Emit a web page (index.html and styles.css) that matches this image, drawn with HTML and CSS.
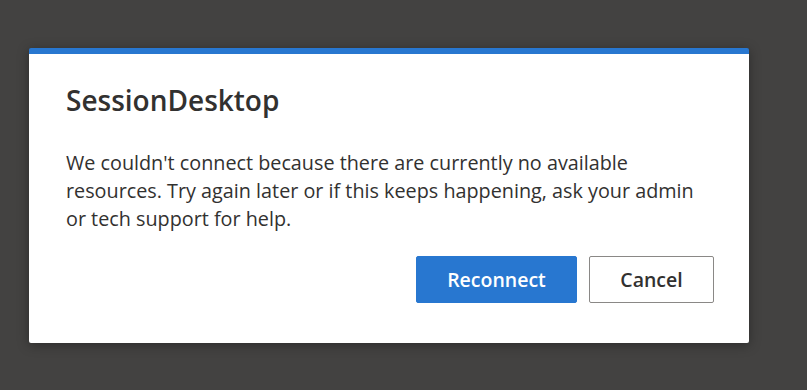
FILE: index.html
```html
<!DOCTYPE html>
<html lang="en">
<head>
    <meta charset="UTF-8">
    <meta name="viewport" content="width=device-width, initial-scale=1.0">
    <title>SessionDesktop</title>
    <link rel="stylesheet" href="styles.css">
</head>
<body>
<div class="dialog">
    <h1 class="dialog-title">SessionDesktop</h1>
    <p class="dialog-text">We couldn't connect because there are currently no available resources. Try again later or if this keeps happening, ask your admin or tech support for help.</p>
    <div class="dialog-actions">
        <button class="btn btn-primary">Reconnect</button>
        <button class="btn btn-default">Cancel</button>
    </div>
</div>
</body>
</html>
```

FILE: styles.css
```css
body {
    margin: 0;
    padding: 48px 0 0 29px;
    background-color: #434241;
    font-family: 'Open Sans', 'Noto Sans', sans-serif;
    color: #323130;
    height: 390px;
    box-sizing: border-box;
    overflow: hidden;
}

.dialog {
    width: 720px;
    height: 295px;
    box-sizing: border-box;
    background-color: #ffffff;
    border-top: 6px solid #2877d0;
    border-radius: 2px;
    padding: 28px 35px 0 37px;
    box-shadow: 0 2px 12px rgba(0, 0, 0, 0.35);
}

.dialog-title {
    margin: 0;
    font-size: 28px;
    font-weight: 600;
    line-height: 36px;
}

.dialog-text {
    margin: 31px 0 0;
    font-size: 19.8px;
    line-height: 28px;
    max-width: 645px;
}

.dialog-actions {
    display: flex;
    justify-content: flex-end;
    gap: 12px;
    margin-top: 23px;
}

.btn {
    font-family: inherit;
    font-size: 19.5px;
    font-weight: 600;
    height: 47px;
    border-radius: 2px;
    cursor: pointer;
}

.btn-primary {
    width: 161px;
    background-color: #2877d0;
    border: 1px solid #2877d0;
    color: #ffffff;
}

.btn-default {
    width: 125px;
    background-color: #ffffff;
    border: 1px solid #8a8886;
    color: #323130;
}
```
